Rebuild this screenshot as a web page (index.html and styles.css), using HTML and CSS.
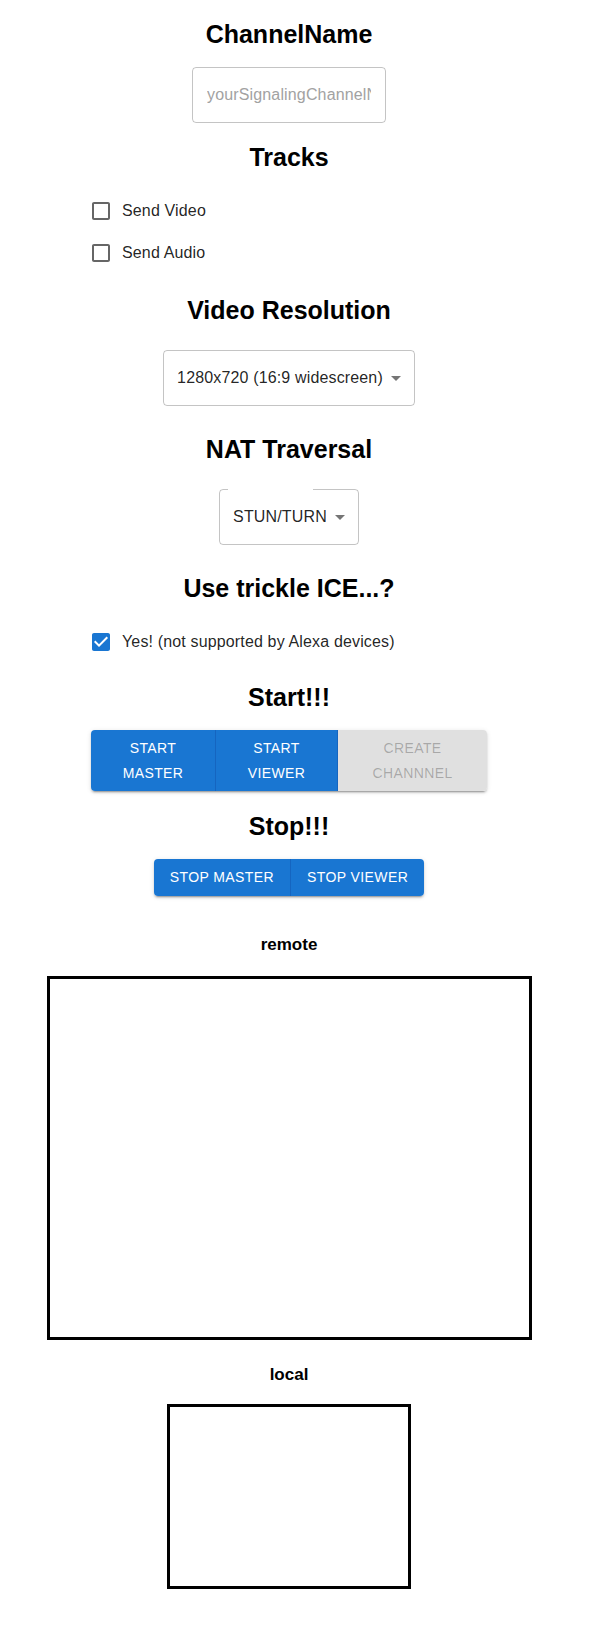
FILE: index.html
```html
<!DOCTYPE html>
<html lang="en">
<head>
  <meta charset="UTF-8">
  <meta name="viewport" content="width=device-width, initial-scale=1.0">
  <title>KVS WebRTC Test</title>
  <link rel="stylesheet" href="styles.css">
</head>
<body>
  <div class="page">
    <main class="panel">
      <h2 class="title">ChannelName</h2>
      <div class="text-field">
        <input class="text-input" type="text" placeholder="yourSignalingChannelName">
      </div>

      <h2 class="title">Tracks</h2>
      <div class="check-group tracks">
        <label class="check-row">
          <span class="check-box">
            <svg viewBox="0 0 24 24" width="24" height="24"><path d="M19 5v14H5V5h14m0-2H5c-1.11 0-2 .9-2 2v14c0 1.1.89 2 2 2h14c1.1 0 2-.9 2-2V5c0-1.1-.9-2-2-2z"/></svg>
          </span>
          <span class="check-label">Send Video</span>
        </label>
        <label class="check-row">
          <span class="check-box">
            <svg viewBox="0 0 24 24" width="24" height="24"><path d="M19 5v14H5V5h14m0-2H5c-1.11 0-2 .9-2 2v14c0 1.1.89 2 2 2h14c1.1 0 2-.9 2-2V5c0-1.1-.9-2-2-2z"/></svg>
          </span>
          <span class="check-label">Send Audio</span>
        </label>
      </div>

      <h2 class="title">Video Resolution</h2>
      <div class="select">
        <span class="select-value">1280x720 (16:9 widescreen)</span>
        <svg class="select-arrow" viewBox="0 0 24 24" width="24" height="24"><path d="M7 10l5 5 5-5z"/></svg>
      </div>

      <h2 class="title">NAT Traversal</h2>
      <div class="select notched">
        <span class="select-value">STUN/TURN</span>
        <svg class="select-arrow" viewBox="0 0 24 24" width="24" height="24"><path d="M7 10l5 5 5-5z"/></svg>
      </div>

      <h2 class="title">Use trickle ICE...?</h2>
      <div class="check-group">
        <label class="check-row">
          <span class="check-box checked">
            <svg viewBox="0 0 24 24" width="24" height="24"><path d="M19 3H5c-1.11 0-2 .9-2 2v14c0 1.1.89 2 2 2h14c1.1 0 2-.9 2-2V5c0-1.1-.9-2-2-2zm-9 14l-5-5 1.41-1.41L10 14.17l7.59-7.59L19 8l-9 9z"/></svg>
          </span>
          <span class="check-label">Yes! (not supported by Alexa devices)</span>
        </label>
      </div>

      <h2 class="title">Start!!!</h2>
      <div class="btn-group start-group">
        <button class="btn btn-master">Start Master</button>
        <button class="btn btn-viewer">Start Viewer</button>
        <button class="btn btn-create" disabled>Create Channnel</button>
      </div>

      <h2 class="title">Stop!!!</h2>
      <div class="btn-group stop-group">
        <button class="btn">Stop Master</button>
        <button class="btn">Stop Viewer</button>
      </div>
    </main>

    <section class="videos">
      <h4 class="video-title remote-title">remote</h4>
      <div class="video-box remote"></div>
      <h4 class="video-title local-title">local</h4>
      <div class="video-box local"></div>
    </section>
  </div>
</body>
</html>
```

FILE: styles.css
```css
/* Global Styles */
body {
  margin: 0;
  font-family: 'Liberation Sans', Arial, sans-serif;
  color: rgba(0, 0, 0, 0.87);
  background: #fff;
}

.page {
  width: 578px;
}

/* Form panel */
.panel {
  width: 396px;
  margin: 0 auto;
  display: flex;
  flex-direction: column;
  align-items: center;
}

.title {
  font-size: 25px;
  line-height: 28px;
  font-weight: bold;
  color: #000;
  margin: 20px 0 19px;
}

/* Text field */
.text-field {
  width: 194px;
  height: 56px;
  box-sizing: border-box;
  border: 1px solid rgba(0, 0, 0, 0.23);
  border-radius: 4px;
}

.text-input {
  width: 100%;
  height: 100%;
  box-sizing: border-box;
  padding: 0 14px;
  border: 0;
  outline: 0;
  background: transparent;
  font-family: inherit;
  font-size: 16px;
  letter-spacing: 0.15px;
  color: rgba(0, 0, 0, 0.87);
}

.text-input::placeholder {
  color: #a2a2a2;
}

/* Checkboxes */
.check-group {
  align-self: stretch;
  display: flex;
  flex-direction: column;
}

.check-group.tracks {
  margin-bottom: 2px;
}

.check-row {
  display: flex;
  align-items: center;
  margin-left: -11px;
  height: 42px;
}

.check-box {
  padding: 9px;
  display: flex;
}

.check-box svg {
  fill: rgba(0, 0, 0, 0.6);
}

.check-box.checked svg {
  fill: #1976d2;
}

.check-label {
  font-size: 16px;
  line-height: 24px;
  letter-spacing: 0.15px;
}

/* Selects */
.select {
  position: relative;
  display: flex;
  align-items: center;
  height: 56px;
  box-sizing: border-box;
  padding: 0 6px 0 13px;
  margin: 7px 0 9px;
  border: 1px solid rgba(0, 0, 0, 0.23);
  border-radius: 4px;
  font-size: 16px;
  letter-spacing: 0.15px;
}

.select-arrow {
  margin-left: 1px;
  fill: rgba(0, 0, 0, 0.54);
}

.notched::before {
  content: '';
  position: absolute;
  top: -1px;
  left: 8px;
  width: 85px;
  height: 1px;
  background: #fff;
}

/* Button groups */
.btn-group {
  display: inline-flex;
  border-radius: 4px;
  box-shadow: 0 3px 1px -2px rgba(0, 0, 0, 0.2), 0 2px 2px 0 rgba(0, 0, 0, 0.14), 0 1px 5px 0 rgba(0, 0, 0, 0.12);
  margin-bottom: 1px;
}

.btn {
  box-sizing: border-box;
  padding: 6px 16px;
  border: 0;
  border-right: 1px solid #1565c0;
  background: #1976d2;
  color: #fff;
  font-family: inherit;
  font-size: 14px;
  line-height: 1.75;
  letter-spacing: 0.02857em;
  text-transform: uppercase;
  text-align: center;
}

.btn:first-child {
  border-radius: 4px 0 0 4px;
}

.btn:last-child {
  border-right: 0;
  border-radius: 0 4px 4px 0;
}

.btn:disabled {
  background: #e0e0e0;
  color: rgba(0, 0, 0, 0.26);
}

.btn-master {
  width: 125px;
}

.btn-viewer {
  width: 122px;
}

.btn-create {
  width: 149px;
}

/* Video boxes */
.videos {
  width: 578px;
  display: flex;
  flex-direction: column;
  align-items: center;
}

.video-title {
  font-size: 17px;
  line-height: 18px;
  font-weight: bold;
  color: #000;
  margin: 0;
}

.remote-title {
  margin-top: 39px;
  margin-bottom: 22px;
}

.local-title {
  margin-top: 26px;
  margin-bottom: 20px;
}

.video-box {
  box-sizing: border-box;
  border: 3px solid #000;
}

.video-box.remote {
  width: 485px;
  height: 364px;
}

.video-box.local {
  width: 244px;
  height: 185px;
}
```
